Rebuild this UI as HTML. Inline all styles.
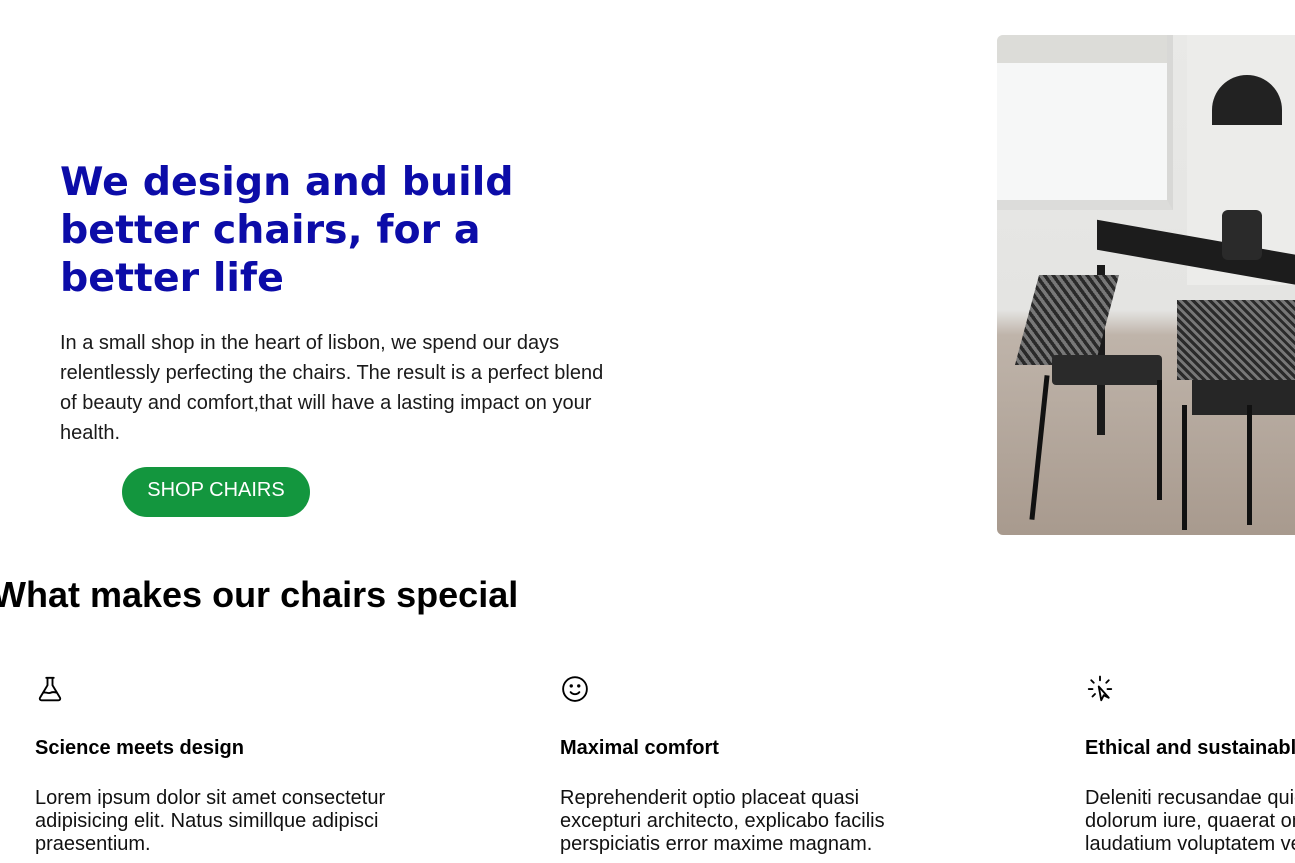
<!DOCTYPE html>
<html><head><style>
html,body{margin:0;width:1295px;height:863px;overflow:hidden}
body{background:#fff;font-family:"Liberation Sans",Arial,sans-serif;position:relative;color:#111}
h1{position:absolute;left:60px;top:158px;margin:0;font-family:"DejaVu Sans",sans-serif;font-weight:bold;font-size:39.5px;line-height:48px;color:#0c0ca8;width:520px}
.p{position:absolute;left:60px;top:328px;width:552px;font-size:20px;line-height:30px;color:#1a1a1a}
.btn{position:absolute;left:122px;top:467px;width:188px;height:50px;border-radius:25px;background:#13963e;color:#fff;font-size:20px;line-height:47px;text-align:center}
.img{position:absolute;left:997px;top:35px;width:298px;height:500px;border-radius:6px 0 0 6px;overflow:hidden;background:linear-gradient(#e9e9e7 0%,#e4e4e2 55%,#bfb4aa 60%,#a89a8e 100%)}
h2{position:absolute;left:-8px;top:574px;margin:0;font-size:36px;font-weight:bold;color:#000}
.f{position:absolute;top:674px;width:420px}
.f svg{display:block}
.f h3{position:absolute;top:63px;margin:0;font-size:20px;font-weight:bold;white-space:nowrap;color:#000}
.f p{position:absolute;top:113px;margin:0;font-size:20px;line-height:23px;width:360px;color:#111}
</style></head><body>
<h1>We design and build better chairs, for a better life</h1>
<div class="p">In a small shop in the heart of lisbon, we spend our days relentlessly perfecting the chairs. The result is a perfect blend of beauty and comfort,that will have a lasting impact on your health.</div>
<div class="btn">SHOP CHAIRS</div>
<div class="img">
<div style="position:absolute;left:0;top:0;width:170px;height:165px;background:#f6f7f7;border-right:6px solid #d8d8d6;border-bottom:10px solid #dcdcda"></div>
<div style="position:absolute;left:0;top:0;width:170px;height:28px;background:#dcdcd8"></div>
<div style="position:absolute;left:190px;top:0;width:130px;height:250px;background:#ececea"></div>
<div style="position:absolute;left:215px;top:40px;width:70px;height:50px;background:#222;border-radius:35px 35px 0 0"></div>
<div style="position:absolute;left:100px;top:205px;width:230px;height:30px;background:#1c1c1c;transform:skewY(10deg)"></div>
<div style="position:absolute;left:225px;top:175px;width:40px;height:50px;background:#2a2a2a;border-radius:6px"></div>
<div style="position:absolute;left:100px;top:230px;width:8px;height:170px;background:#1a1a1a"></div>
<div style="position:absolute;left:30px;top:240px;width:80px;height:90px;background:repeating-linear-gradient(45deg,#2a2a2a 0 3px,#777 3px 6px);transform:skewX(-15deg)"></div>
<div style="position:absolute;left:55px;top:320px;width:110px;height:30px;background:#2a2a2a;border-radius:4px"></div>
<div style="position:absolute;left:40px;top:340px;width:5px;height:145px;background:#111;transform:rotate(6deg)"></div>
<div style="position:absolute;left:160px;top:345px;width:5px;height:120px;background:#111"></div>
<div style="position:absolute;left:180px;top:265px;width:118px;height:80px;background:repeating-linear-gradient(45deg,#2a2a2a 0 3px,#777 3px 6px)"></div>
<div style="position:absolute;left:195px;top:345px;width:103px;height:35px;background:#262626"></div>
<div style="position:absolute;left:185px;top:370px;width:5px;height:125px;background:#111"></div>
<div style="position:absolute;left:250px;top:370px;width:5px;height:120px;background:#111"></div>
</div>
<h2>What makes our chairs special</h2>
<div class="f" style="left:35px">
<svg width="30" height="30" viewBox="0 0 24 24" fill="none" stroke="#000" stroke-width="1.5" stroke-linecap="round" stroke-linejoin="round"><path d="M9 3h6M10 3v6L4 19c-.6 1 .1 2 1.2 2h13.6c1.1 0 1.8-1 1.2-2L14 9V3M6.5 15c2-1 4 1 6 0s3.5-.5 5 0"/></svg>
<h3>Science meets design</h3>
<p>Lorem ipsum dolor sit amet consectetur adipisicing elit. Natus simillque adipisci praesentium.</p></div>
<div class="f" style="left:560px">
<svg width="30" height="30" viewBox="0 0 24 24" fill="none" stroke="#000" stroke-width="1.5" stroke-linecap="round"><circle cx="12" cy="12" r="9.5"/><path d="M8.5 14.5c1.8 2.2 5.2 2.2 7 0"/><circle cx="9" cy="9.5" r=".6" fill="#000"/><circle cx="15" cy="9.5" r=".6" fill="#000"/></svg>
<h3>Maximal comfort</h3>
<p style="width:340px">Reprehenderit optio placeat quasi excepturi architecto, explicabo facilis perspiciatis error maxime magnam.</p></div>
<div class="f" style="left:1085px;width:210px;overflow:hidden;height:190px">
<svg width="30" height="30" viewBox="0 0 24 24" fill="none" stroke="#000" stroke-width="1.5" stroke-linecap="round" stroke-linejoin="round"><path d="M12 2v3M5 5l2 2M19 5l-2 2M3 12h3M18 12h3M6 18l2-2M11 10l2 11 2-4 4 2z"/></svg>
<h3>Ethical and sustainable</h3>
<p style="width:320px">Deleniti recusandae quidem dolorum iure, quaerat omnis laudatium voluptatem vel.</p></div>
</body></html>
